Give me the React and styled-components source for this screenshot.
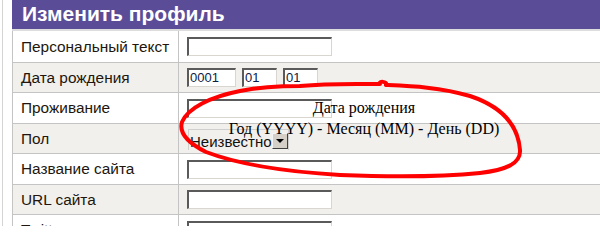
import React from 'react'
import styled, { createGlobalStyle } from 'styled-components'

const Global = createGlobalStyle`
  html, body {
    margin: 0;
    padding: 0;
    background: #fff;
    overflow: hidden;
  }
`

const Page = styled.div`
  position: relative;
  height: 226px;
  overflow: hidden;
  padding-left: 2px;
`

const Rail = styled.div`
  height: 100%;
  border-left: 1px solid #d4d4d4;
  padding-left: 9px;
`

const Panel = styled.div`
  width: 720px;
`

const Header = styled.div`
  height: 29px;
  background: #5a4c96;
  border-bottom: 2px solid #dcdcdc;
  color: #fff;
  font-family: "Liberation Sans", Arial, sans-serif;
  font-weight: bold;
  font-size: 21px;
  line-height: 27px;
  padding-left: 10px;
`

const Table = styled.div`
  border-left: 1px solid #c4c4c4;
`

const Row = styled.div`
  display: grid;
  grid-template-columns: 166px 1fr;
  height: ${p => p.$h}px;
  border-bottom: 1px solid #c4c4c4;
  background: ${p => (p.$alt ? '#f1f0ec' : '#fff')};
`

const Label = styled.div`
  display: flex;
  align-items: center;
  padding-left: 8px;
  border-right: 1px solid #c4c4c4;
  font-family: "Liberation Sans", Arial, sans-serif;
  font-size: 15.4px;
  color: #22160c;
  white-space: nowrap;
`

const Field = styled.div`
  display: flex;
  align-items: center;
  gap: 6px;
  padding-left: 8px;
`

const Input = styled.div`
  box-sizing: border-box;
  width: ${p => p.$w}px;
  height: 19px;
  background: #fff;
  border-top: 2px solid #5a5a5a;
  border-left: 2px solid #5a5a5a;
  border-right: 1px solid #d8d6cf;
  border-bottom: 1px solid #d8d6cf;
  font-family: "Liberation Sans", Arial, sans-serif;
  font-size: 13px;
  line-height: 15px;
  color: #0e1c46;
  padding-left: 1px;
`

const Select = styled.div`
  box-sizing: border-box;
  align-self: flex-start;
  margin-top: 5px;
  margin-left: 1px;
  width: 101px;
  height: 21px;
  display: flex;
  align-items: flex-end;
  justify-content: space-between;
  border: 1px solid #cfcfcf;
  border-bottom: none;
  font-family: "Liberation Sans", Arial, sans-serif;
  font-size: 15px;
  line-height: 16px;
  color: #111;
  padding-left: 1px;
`

const DropButton = styled.div`
  box-sizing: border-box;
  width: 16px;
  height: 16px;
  background: #d4d0c8;
  border-top: 1px solid #f4f4f4;
  border-left: 1px solid #f4f4f4;
  border-right: 1px solid #404040;
  border-bottom: 1px solid #404040;
  display: flex;
  align-items: center;
  justify-content: center;
  margin-bottom: 1px;
`

const Arrow = styled.div`
  width: 0;
  height: 0;
  border-left: 4px solid transparent;
  border-right: 4px solid transparent;
  border-top: 4px solid #000;
`

const Tip = styled.div`
  position: absolute;
  left: 164px;
  top: 97px;
  width: 400px;
  text-align: center;
  font-family: "Liberation Serif", "Times New Roman", serif;
  font-size: 16px;
  line-height: 21px;
  color: #000;
  pointer-events: none;
`

const Scribble = styled.svg`
  position: absolute;
  left: 0;
  top: 0;
  pointer-events: none;
`

const rows = [
  { label: 'Персональный текст', h: 31, field: <Input $w={145} /> },
  {
    label: 'Дата рождения',
    h: 29,
    alt: true,
    field: (
      <>
        <Input $w={49}>0001</Input>
        <Input $w={35}>01</Input>
        <Input $w={35}>01</Input>
      </>
    ),
  },
  { label: 'Проживание', h: 30, field: <Input $w={145} /> },
  {
    label: 'Пол',
    h: 29,
    alt: true,
    field: (
      <Select>
        Неизвестно
        <DropButton><Arrow /></DropButton>
      </Select>
    ),
  },
  { label: 'Название сайта', h: 30, field: <Input $w={145} /> },
  { label: 'URL сайта', h: 29, alt: true, field: <Input $w={145} /> },
  { label: 'Twitter', h: 30, field: <Input $w={145} /> },
]

const App = () => {
  return (
    <>
      <Global />
      <Page>
        <Rail>
          <Panel>
            <Header>Изменить профиль</Header>
            <Table>
              {rows.map(r => (
                <Row key={r.label} $h={r.h} $alt={r.alt}>
                  <Label>{r.label}</Label>
                  <Field>{r.field}</Field>
                </Row>
              ))}
            </Table>
          </Panel>
        </Rail>
        <Tip>
          Дата рождения<br />
          Год (YYYY) - Месяц (MM) - День (DD)
        </Tip>
        <Scribble width="600" height="226" viewBox="0 0 600 226">
          <path
            d="M300 86 C330 83 360 84 380 84 C378 81 388 81 386 85 C410 86 440 87 470 96 C500 106 518 124 520 150 C521 164 505 170 480 173 C440 177 390 177 340 175 C290 172 240 165 206 152 C186 142 179 132 182 122 C188 108 210 97 240 91 C260 87 280 86 300 86"
            fill="none"
            stroke="#ff0000"
            strokeWidth="4"
            strokeLinecap="round"
            strokeLinejoin="round"
          />
        </Scribble>
      </Page>
    </>
  )
}

export default App
